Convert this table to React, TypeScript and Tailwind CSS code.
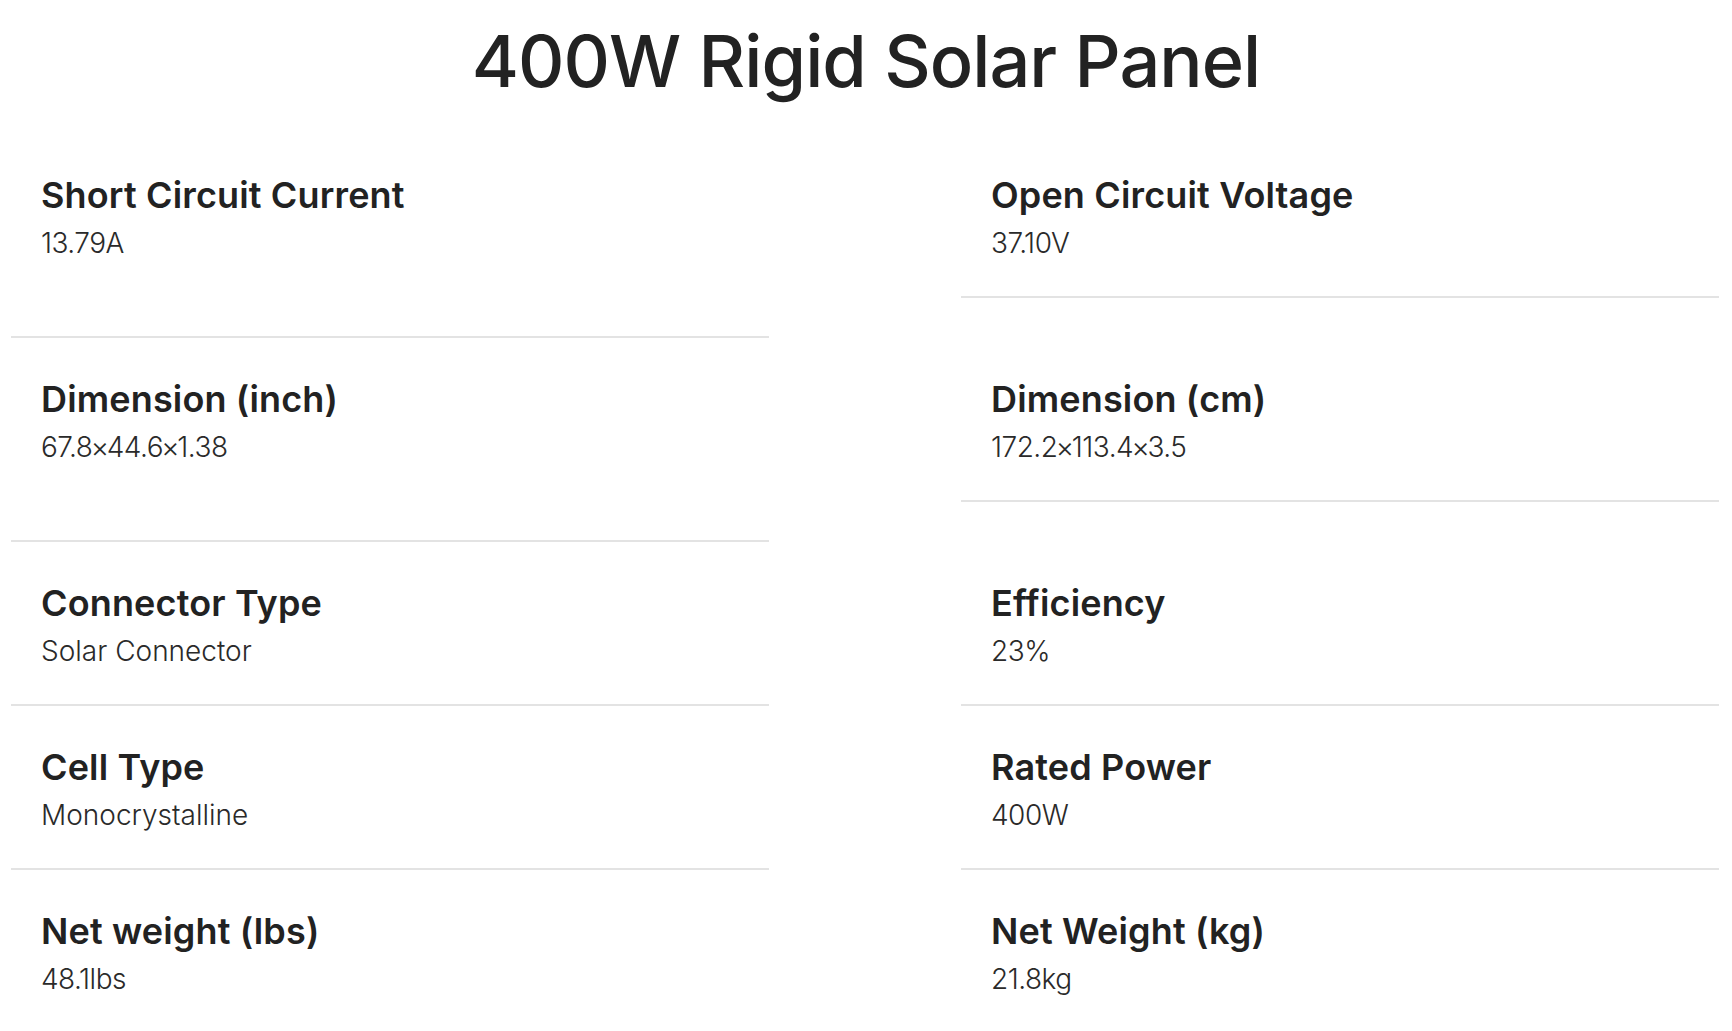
const specs = [
  { left: { label: 'Short Circuit Current', value: '13.79A' }, right: { label: 'Open Circuit Voltage', value: '37.10V' }, tall: true },
  { left: { label: 'Dimension (inch)', value: '67.8×44.6×1.38' }, right: { label: 'Dimension (cm)', value: '172.2×113.4×3.5' }, tall: true },
  { left: { label: 'Connector Type', value: 'Solar Connector' }, right: { label: 'Efficiency', value: '23%' } },
  { left: { label: 'Cell Type', value: 'Monocrystalline' }, right: { label: 'Rated Power', value: '400W' } },
  { left: { label: 'Net weight (lbs)', value: '48.1lbs' }, right: { label: 'Net Weight (kg)', value: '21.8kg' }, last: true },
];

// numbers in the reference font run a bit narrower than Inter's
function Value({ text }: { text: string }) {
  const numeric = /\d/.test(text);
  const parts = text.split('×');
  return (
    <div
      className={
        'mt-[12px] text-[28px] leading-[32px] font-light text-[#2a2a2a] ' + (numeric ? 'tracking-[-0.5px]' : '')
      }
    >
      {parts.map((p, i) => (
        <span key={i}>
          {i > 0 && <span className="mx-[-1.75px]">×</span>}
          {p}
        </span>
      ))}
    </div>
  );
}

function SpecItem({ label, value, tall, last }: { label: string; value: string; tall?: boolean; last?: boolean }) {
  return (
    <div
      className={
        'pl-[30px] pt-[41px] ' +
        (last ? 'pb-[37px]' : tall ? 'pb-[77px] border-b-2 border-[#e3e3e3]' : 'pb-[37px] border-b-2 border-[#e3e3e3]')
      }
    >
      <div className="text-[36px] leading-[40px] font-semibold text-[#222] tracking-[0.15px]">{label}</div>
      <Value text={value} />
    </div>
  );
}

function SpecItemRight({ label, value, last }: { label: string; value: string; last?: boolean }) {
  return (
    <div className={'pl-[30px] pt-[41px] pb-[37px] ' + (last ? '' : 'border-b-2 border-[#e3e3e3]')}>
      <div className="text-[36px] leading-[40px] font-semibold text-[#222] tracking-[0.15px]">{label}</div>
      <Value text={value} />
    </div>
  );
}

export default function App() {
  return (
    <div className="min-h-screen bg-white font-['Inter','Liberation_Sans',sans-serif]">
      <h1 className="pt-[18px] text-center text-[72px] leading-[86px] font-medium text-[#222] tracking-[-0.95px]">
        400W Rigid Solar Panel
      </h1>
      <div className="mt-[30px] pl-[11px] grid grid-cols-[758px_758px] gap-x-[192px] items-start">
        {specs.map((row, i) => (
          <div key={i} className="contents">
            <SpecItem label={row.left.label} value={row.left.value} tall={row.tall} last={row.last} />
            <SpecItemRight label={row.right.label} value={row.right.value} last={row.last} />
          </div>
        ))}
      </div>
    </div>
  );
}
